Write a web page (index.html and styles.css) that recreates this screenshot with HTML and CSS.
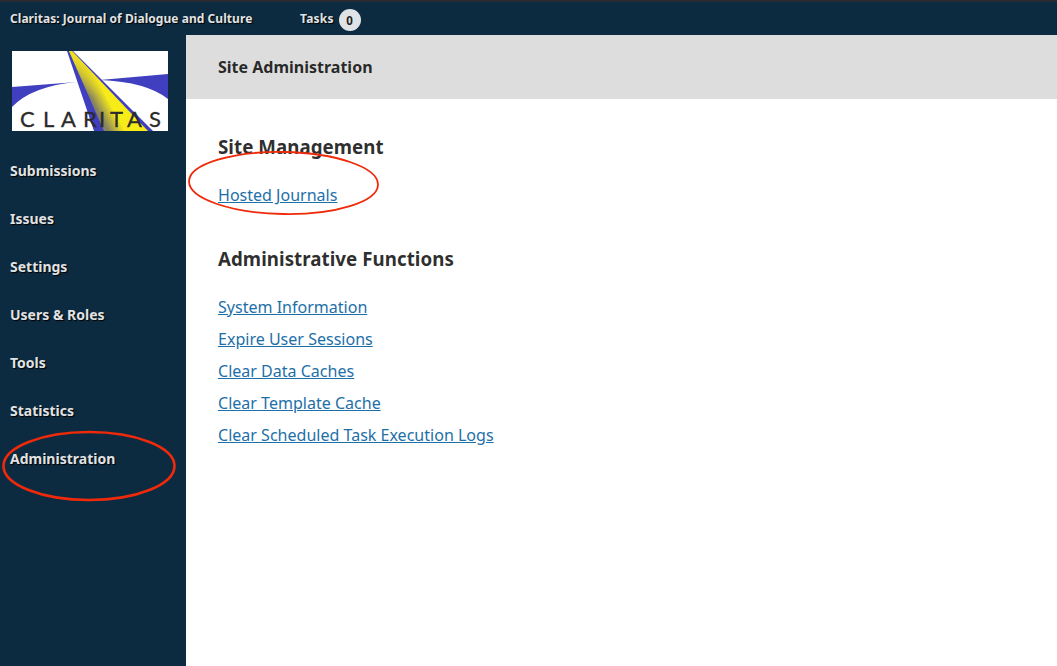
FILE: index.html
```html
<!DOCTYPE html>
<html lang="en">
<head>
<meta charset="utf-8">
<title>Site Administration</title>
<link rel="stylesheet" href="styles.css">
</head>
<body>
<header class="topbar">
  <a class="journal" href="#">Claritas: Journal of Dialogue and Culture</a>
  <a class="tasks" href="#">Tasks <span class="badge">0</span></a>
</header>
<div class="shell">
  <nav class="sidebar">
    <div class="logo">
      <svg width="156" height="80" viewBox="0 0 156 80">
        <defs>
          <linearGradient id="beam" gradientUnits="userSpaceOnUse" x1="76" y1="42" x2="89" y2="35">
            <stop offset="0" stop-color="#86825f"/>
            <stop offset="1" stop-color="#f8ec18"/>
          </linearGradient>
          <linearGradient id="beam-top" gradientUnits="userSpaceOnUse" x1="0" y1="5" x2="0" y2="45">
            <stop offset="0" stop-color="#f0e020" stop-opacity="1"/>
            <stop offset="1" stop-color="#f0e020" stop-opacity="0"/>
          </linearGradient>
        </defs>
        <rect width="156" height="80" fill="#fff"/>
        <path d="M0 36 L65 31 Q20 35 0 56Z" fill="#3f3fc0"/>
        <path d="M88 29 L156 23 V48 Q135 31 88 29Z" fill="#3f3fc0"/>
        <path d="M55 0 L61 0 L141 80 H82Z" fill="#3f3fc0"/>
        <path d="M57 0 L60 0 L136 80 H92Z" fill="url(#beam)"/>
        <path d="M57 0 L60 0 L136 80 H92Z" fill="url(#beam-top)"/>
        <text class="logo-text" x="8 31 49 71 87 98 115 137" y="76">CLARITAS</text>
      </svg>
    </div>
    <ul class="menu">
      <li><a href="#">Submissions</a></li>
      <li><a href="#">Issues</a></li>
      <li><a href="#">Settings</a></li>
      <li><a href="#">Users &amp; Roles</a></li>
      <li><a href="#">Tools</a></li>
      <li><a href="#">Statistics</a></li>
      <li><a href="#">Administration</a></li>
    </ul>
  </nav>
  <main class="content">
    <div class="page-title">Site Administration</div>
    <section class="body">
      <h2 class="section-head">Site Management</h2>
      <ul class="links">
        <li><a href="#">Hosted Journals</a></li>
      </ul>
      <h2 class="section-head">Administrative Functions</h2>
      <ul class="links">
        <li><a href="#">System Information</a></li>
        <li><a href="#">Expire User Sessions</a></li>
        <li><a href="#">Clear Data Caches</a></li>
        <li><a href="#">Clear Template Cache</a></li>
        <li><a href="#">Clear Scheduled Task Execution Logs</a></li>
      </ul>
    </section>
  </main>
</div>
<svg class="marks" width="1057" height="666" viewBox="0 0 1057 666">
  <ellipse cx="283.500" cy="183" rx="94.500" ry="31" fill="none" stroke="#ee2a0a" stroke-width="1.800" transform="rotate(1 283.500 183)"/>
  <ellipse cx="89" cy="466" rx="85.500" ry="34" fill="none" stroke="#ee2a0a" stroke-width="2.600"/>
</svg>
</body>
</html>
```
FILE: styles.css
```css
* { box-sizing: border-box; }
html, body { margin: 0; padding: 0; height: 100%; overflow: hidden; }
body {
  font-family: "Noto Sans", sans-serif;
  background: #fff;
  color: rgba(0, 0, 0, 0.84);
  display: flex;
  flex-direction: column;
}
.topbar {
  height: 35px;
  flex: none;
  background: #0d2b40;
  border-top: 2px solid #2b2c33;
  display: flex;
  align-items: center;
  padding-left: 10px;
  font-size: 12px;
  font-weight: 700;
}
.topbar a { color: #e0e3e6; text-decoration: none; text-shadow: 1px 1px 1px #000; }
.journal { width: 290px; letter-spacing: 0.05px; }
.tasks { display: flex; align-items: center; gap: 5px; letter-spacing: 0.2px; }
.badge {
  width: 22px;
  height: 22px;
  margin-top: 3px;
  border-radius: 50%;
  background: #dfe3e6;
  color: #222;
  font-size: 11.500px;
  display: flex;
  align-items: center;
  justify-content: center;
}
.topbar .tasks .badge { text-shadow: none; }
.shell { flex: 1; display: flex; min-height: 0; }
.sidebar { width: 186px; flex: none; background: #0d2b40; padding-top: 16px; }
.logo { margin-left: 12px; height: 80px; }
.logo svg { display: block; }
.logo-text { font-family: "Lato", sans-serif; font-size: 22px; fill: #2a2a2a; stroke: #2a2a2a; stroke-width: 0.3px; }
.menu { list-style: none; margin: 15px 0 0; padding: 0; }
.menu li { height: 48px; display: flex; align-items: center; padding-left: 10px; }
.menu a {
  color: #e0e3e6;
  font-size: 14px;
  font-weight: 700;
  text-decoration: none;
  text-shadow: 1px 1px 1px #000;
}
.content { flex: 1; min-width: 0; }
.page-title {
  height: 64px;
  background: #ddd;
  display: flex;
  align-items: center;
  padding-left: 32px;
  font-size: 16px;
  font-weight: 700;
}
.body { padding: 32px 32px 0; }
.section-head { margin: 0; font-size: 18.720px; font-weight: 700; line-height: 32px; letter-spacing: 0.05px; }
.links { list-style: none; margin: 16px 0 32px; padding: 0; }
.links li { height: 32px; line-height: 32px; font-size: 16.040px; }
.links a { color: #1e6fa8; text-decoration: underline; }
.marks { position: absolute; left: 0; top: 0; pointer-events: none; }
```
